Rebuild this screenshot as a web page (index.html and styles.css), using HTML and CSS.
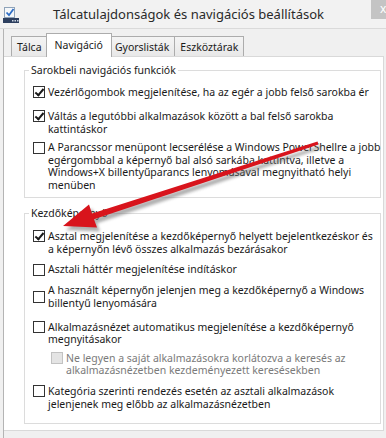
FILE: index.html
```html
<!DOCTYPE html>
<html lang="hu">
<head>
    <meta charset="UTF-8">
    <meta name="viewport" content="width=device-width, initial-scale=1.0">
    <title>Tálcatulajdonságok és navigációs beállítások</title>
    <link rel="stylesheet" href="styles.css">
</head>
<body>
    <div class="window">
        <div class="titlebar">
            <svg class="app-icon" width="16" height="16" viewBox="0 0 16 16">
                <rect x="1.5" y="0.5" width="10" height="10" fill="#f4f7fa" stroke="#8fa3b9"/>
                <path d="M3.5 5.5 L6 8.2 L10.5 2" stroke="#2c6cc4" stroke-width="1.8" fill="none"/>
                <rect x="0" y="11" width="16" height="5" fill="#2d3f5f"/>
                <rect x="9" y="13" width="1.5" height="1.5" fill="#cfd8e4"/>
                <rect x="11.5" y="13" width="1.5" height="1.5" fill="#cfd8e4"/>
                <rect x="14" y="13" width="1.5" height="1.5" fill="#cfd8e4"/>
            </svg>
            <div class="title">Tálcatulajdonságok és navigációs beállítások</div>
            <div class="close-btn">x</div>
        </div>

        <div class="dialog">
            <div class="tabs">
                <div class="tab">Tálca</div>
                <div class="tab active">Navigáció</div>
                <div class="tab">Gyorslisták</div>
                <div class="tab">Eszköztárak</div>
            </div>

            <div class="page">
                <fieldset class="group">
                    <legend>Sarokbeli navigációs funkciók</legend>
                    <div class="option">
                        <span class="check checked"></span>
                        <span class="label">Vezérlőgombok megjelenítése, ha az egér a jobb felső sarokba ér</span>
                    </div>
                    <div class="option gap-lg">
                        <span class="check checked"></span>
                        <span class="label">Váltás a legutóbbi alkalmazások között a bal felső sarokba<br>kattintáskor</span>
                    </div>
                    <div class="option gap-sm">
                        <span class="check"></span>
                        <span class="label">A Parancssor menüpont lecserélése a Windows PowerShellre a jobb<br>egérgombbal a képernyő bal alsó sarkába kattintva, illetve a<br>Windows+X billentyűparancs lenyomásával megnyitható helyi<br>menüben</span>
                    </div>
                </fieldset>

                <fieldset class="group group-start">
                    <legend>Kezdőképernyő</legend>
                    <div class="option">
                        <span class="check checked"></span>
                        <span class="label">Asztal megjelenítése a kezdőképernyő helyett bejelentkezéskor és<br>a képernyőn lévő összes alkalmazás bezárásakor</span>
                    </div>
                    <div class="option">
                        <span class="check"></span>
                        <span class="label">Asztali háttér megjelenítése indításkor</span>
                    </div>
                    <div class="option middle">
                        <span class="check"></span>
                        <span class="label">A használt képernyőn jelenjen meg a kezdőképernyő a Windows<br>billentyű lenyomására</span>
                    </div>
                    <div class="option gap-lg">
                        <span class="check"></span>
                        <span class="label">Alkalmazásnézet automatikus megjelenítése a kezdőképernyő<br>megnyitásakor</span>
                    </div>
                    <div class="option gap-sm sub disabled">
                        <span class="check"></span>
                        <span class="label">Ne legyen a saját alkalmazásokra korlátozva a keresés az<br>alkalmazásnézetben kezdeményezett keresésekben</span>
                    </div>
                    <div class="option">
                        <span class="check"></span>
                        <span class="label">Kategória szerinti rendezés esetén az asztali alkalmazások<br>jelenjenek meg előbb az alkalmazásnézetben</span>
                    </div>
                </fieldset>
            </div>
        </div>

        <!-- kézzel rajzolt piros nyíl a kép fölött -->
        <svg class="arrow" width="386" height="438" viewBox="0 0 386 438">
            <defs>
                <filter id="blur" x="-10%" y="-10%" width="120%" height="120%">
                    <feGaussianBlur stdDeviation="1.6"/>
                </filter>
            </defs>
            <polygon class="arrow-shadow" filter="url(#blur)" transform="translate(3 4)"
                points="317.5,141.6 92,213.5 89,204.5 63,226 97,227.5 94,219.3 318.5,144.4"/>
            <polygon class="arrow-body"
                points="317.5,141.6 92,213.5 89,204.5 63,226 97,227.5 94,219.3 318.5,144.4"/>
        </svg>
    </div>
</body>
</html>
```

FILE: styles.css
```css
body {
    margin: 0;
    padding: 0;
    font-family: "Noto Sans", "DejaVu Sans", sans-serif;
    font-size: 10.5px;
    color: #1a1a1a;
    background-color: #f0f0f0;
}

.window {
    position: relative;
    width: 386px;
    height: 438px;
    display: flex;
    flex-direction: column;
    overflow: hidden;
    background-color: #f0f0f0;
}

.titlebar {
    height: 28px;
    display: flex;
    align-items: center;
    padding-left: 3px;
    border-bottom: 1px solid #dadada;
    background-color: #f2f2f2;
}

.app-icon {
    flex: none;
    margin-top: 2px;
}

.title {
    margin-left: 34px;
    font-size: 13px;
    color: #2a2a2a;
    white-space: nowrap;
}

.close-btn {
    align-self: flex-start;
    margin-left: auto;
    width: 15px;
    height: 19px;
    padding-left: 9px;
    box-sizing: border-box;
    overflow: hidden;
    background-color: #c4c4c4;
    color: #fff;
    font-size: 12px;
    line-height: 17px;
}

.dialog {
    flex: 1;
    display: flex;
    flex-direction: column;
    margin-left: 3px;
    border-left: 1px solid #b4b4b4;
}

.tabs {
    height: 27px;
    display: flex;
    align-items: flex-end;
    padding-left: 7px;
}

.tab {
    height: 20px;
    box-sizing: border-box;
    padding: 0 5px;
    border: 1px solid #acacac;
    border-bottom: none;
    margin-left: -1px;
    background: linear-gradient(#f4f4f4, #e8e8e8);
    line-height: 20px;
    white-space: nowrap;
}

.tab:first-child {
    margin-left: 0;
}

.tab.active {
    position: relative;
    z-index: 1;
    height: 24px;
    margin: 0 -2px -1px -2px;
    padding: 0 8px;
    background: #fff;
    line-height: 22px;
}

.page {
    position: relative;
    height: 375px;
    margin-right: 2px;
    background-color: #fff;
    border-top: 1px solid #d9d9d9;
    border-right: 1px solid #d9d9d9;
    border-bottom: 1px solid #d9d9d9;
    box-sizing: border-box;
}

.group {
    margin: 7px 2px 0 20px;
    padding: 0 0 5px 8px;
    border: 1px solid #dcdcdc;
    min-width: 0;
}

.group legend {
    margin-left: -4px;
    padding: 0 2px;
    line-height: 13px;
}

.group-start {
    margin-top: 9px;
    padding-bottom: 13px;
}

.option {
    display: flex;
    align-items: flex-start;
    margin-top: 8px;
    line-height: 12.6px;
    white-space: nowrap;
}

.option:first-of-type {
    margin-top: 9px;
}

.group-start .option:first-of-type {
    margin-top: 10.5px;
}

.option.gap-lg {
    margin-top: 11.5px;
}

.option.gap-sm {
    margin-top: 6px;
}

.check {
    flex: none;
    position: relative;
    width: 12px;
    height: 12px;
    box-sizing: border-box;
    margin: 0.3px 3px 0 0;
    border: 1px solid #333;
    background-color: #fff;
}

.check.checked::after {
    content: "";
    position: absolute;
    left: 3px;
    top: 0;
    width: 3px;
    height: 7px;
    border-right: 2px solid #1a1a1a;
    border-bottom: 2px solid #1a1a1a;
    transform: rotate(40deg);
}

.option.middle {
    align-items: center;
}

.option.sub {
    padding-left: 18px;
}

.option.disabled {
    color: #7a7a7a;
}

.option.disabled .check {
    border-color: #c2c2c2;
    background-color: #e4e4e4;
}

.arrow {
    position: absolute;
    left: 0;
    top: 0;
    pointer-events: none;
}

.arrow-shadow {
    fill: #6e6e6e;
    opacity: 0.55;
}

.arrow-body {
    fill: #d8141c;
}
```
